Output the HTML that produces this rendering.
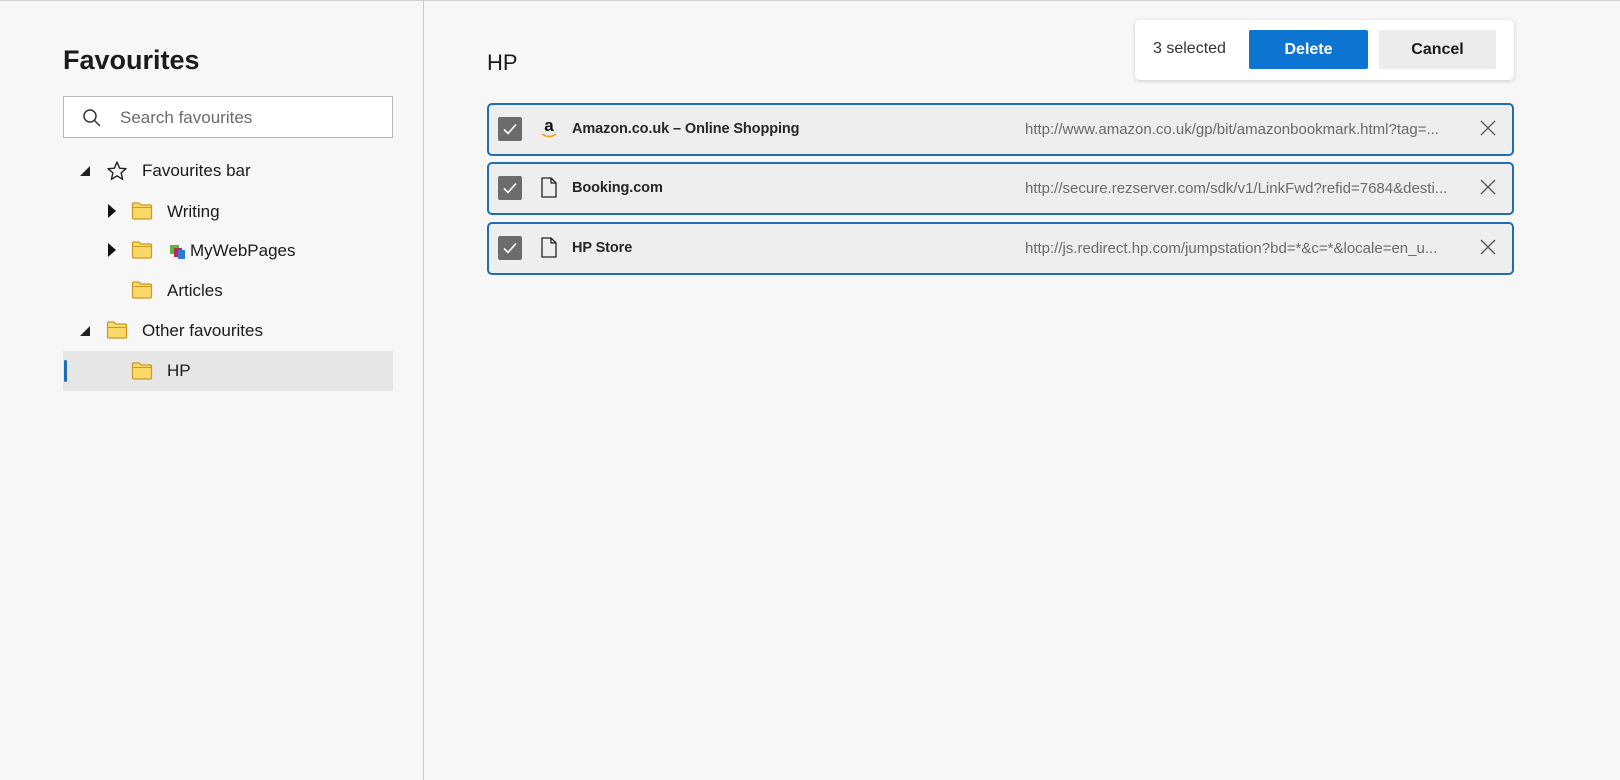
<!DOCTYPE html>
<html><head><meta charset="utf-8"><style>
*{box-sizing:border-box;margin:0;padding:0}
body{width:1620px;height:780px;background:#f7f7f7;font-family:"Liberation Sans",sans-serif;color:#1b1b1b;position:relative;overflow:hidden}
.abs{position:absolute}
.topline{left:0;top:0;width:1620px;height:1px;background:#d0d0d0}
.div{left:423px;top:0;width:1px;height:780px;background:#c8c8c8}
h1{position:absolute;left:63px;top:45px;font-size:27px;font-weight:600;color:#1b1b1b}
.search{left:63px;top:96px;width:330px;height:42px;border:1px solid #b8b8b8;background:#fff}
.search span{position:absolute;left:56px;top:11px;font-size:17px;color:#6b6b6b}
.tr{position:absolute;font-size:17px;color:#1b1b1b}
.sel{left:63px;top:351px;width:330px;height:40px;background:#e6e6e6}
.selbar{left:64px;top:360px;width:3px;height:22px;background:#1a6fb5;border-radius:2px}
.row{position:absolute;left:487px;width:1027px;height:53px;border:2px solid #1f6db3;border-radius:5px;background:#eeeeee}
.cb{position:absolute;left:9px;top:12px;width:24px;height:24px;background:#6c6c6c;border-radius:2px}
.rt{position:absolute;left:83px;top:16px;font-size:14.5px;font-weight:600;color:#262626;letter-spacing:-0.1px}
.ru{position:absolute;left:536px;top:16px;font-size:15px;color:#6a6a6a}
.x{position:absolute;left:990px;top:14px}
.tb{left:1135px;top:20px;width:379px;height:60px;background:#fff;border-radius:5px;box-shadow:0 1px 4px rgba(0,0,0,.18)}
</style></head><body>
<div class="abs topline"></div>
<div class="abs div"></div>
<h1>Favourites</h1>
<div class="abs search">
<svg class="abs" style="left:18px;top:11px" width="20" height="20" viewBox="0 0 20 20"><circle cx="8" cy="8" r="6" fill="none" stroke="#333" stroke-width="1.5"/><path d="M12.5 12.5L18 18" stroke="#333" stroke-width="1.5"/></svg>
<span>Search favourites</span></div>

<svg class="abs" style="left:78px;top:164px" width="14" height="14"><path d="M12 2L12 12L2 12Z" fill="#222"/></svg>
<svg class="abs" style="left:106px;top:160px" width="22" height="22" viewBox="0 0 22 22"><path d="M11 2L13.6 8.2L20 8.7L15.1 12.9L16.6 19.3L11 15.9L5.4 19.3L6.9 12.9L2 8.7L8.4 8.2Z" fill="none" stroke="#222" stroke-width="1.4" stroke-linejoin="round"/></svg>
<div class="tr" style="left:142px;top:161px">Favourites bar</div>

<svg class="abs" style="left:107px;top:203px" width="10" height="16"><path d="M1 1L9 8L1 15Z" fill="#111"/></svg>
<svg class="abs" style="left:131px;top:201px" width="22" height="20" viewBox="0 0 22 20"><path d="M1.5 3.5Q1.5 2 3 2H8L10 4H19Q20.5 4 20.5 5.5V16.5Q20.5 18 19 18H3Q1.5 18 1.5 16.5Z" fill="#fcd86a" stroke="#c99a1e" stroke-width="1.2"/><path d="M1.5 6.5H20.5" stroke="#c99a1e" stroke-width="1"/></svg>
<div class="tr" style="left:167px;top:202px">Writing</div>

<svg class="abs" style="left:107px;top:242px" width="10" height="16"><path d="M1 1L9 8L1 15Z" fill="#111"/></svg>
<svg class="abs" style="left:131px;top:240px" width="22" height="20" viewBox="0 0 22 20"><path d="M1.5 3.5Q1.5 2 3 2H8L10 4H19Q20.5 4 20.5 5.5V16.5Q20.5 18 19 18H3Q1.5 18 1.5 16.5Z" fill="#fcd86a" stroke="#c99a1e" stroke-width="1.2"/><path d="M1.5 6.5H20.5" stroke="#c99a1e" stroke-width="1"/></svg>
<svg class="abs" style="left:169px;top:243px" width="18" height="18"><rect x="1" y="2" width="9" height="9" fill="#5cb83a"/><rect x="5" y="5" width="8" height="9" fill="#c0245c"/><rect x="9" y="7" width="7" height="9" fill="#2f7ad8"/></svg>
<div class="tr" style="left:190px;top:241px">MyWebPages</div>

<svg class="abs" style="left:131px;top:280px" width="22" height="20" viewBox="0 0 22 20"><path d="M1.5 3.5Q1.5 2 3 2H8L10 4H19Q20.5 4 20.5 5.5V16.5Q20.5 18 19 18H3Q1.5 18 1.5 16.5Z" fill="#fcd86a" stroke="#c99a1e" stroke-width="1.2"/><path d="M1.5 6.5H20.5" stroke="#c99a1e" stroke-width="1"/></svg>
<div class="tr" style="left:167px;top:281px">Articles</div>

<svg class="abs" style="left:78px;top:324px" width="14" height="14"><path d="M12 2L12 12L2 12Z" fill="#222"/></svg>
<svg class="abs" style="left:106px;top:320px" width="22" height="20" viewBox="0 0 22 20"><path d="M1.5 3.5Q1.5 2 3 2H8L10 4H19Q20.5 4 20.5 5.5V16.5Q20.5 18 19 18H3Q1.5 18 1.5 16.5Z" fill="#fcd86a" stroke="#c99a1e" stroke-width="1.2"/><path d="M1.5 7.5H20.5" stroke="#c99a1e" stroke-width="1"/></svg>
<div class="tr" style="left:142px;top:321px">Other favourites</div>

<div class="abs sel"></div><div class="abs selbar"></div>
<svg class="abs" style="left:131px;top:361px" width="22" height="20" viewBox="0 0 22 20"><path d="M1.5 3.5Q1.5 2 3 2H8L10 4H19Q20.5 4 20.5 5.5V16.5Q20.5 18 19 18H3Q1.5 18 1.5 16.5Z" fill="#fcd86a" stroke="#c99a1e" stroke-width="1.2"/><path d="M1.5 6.5H20.5" stroke="#c99a1e" stroke-width="1"/></svg>
<div class="tr" style="left:167px;top:361px">HP</div>

<div class="abs" style="left:487px;top:50px;font-size:22px;color:#1b1b1b">HP</div>

<div class="abs tb">
<div class="abs" style="left:18px;top:20px;font-size:16px;color:#333">3 selected</div>
<div class="abs" style="left:114px;top:10px;width:119px;height:39px;background:#0d74d1;color:#fff;font-weight:600;font-size:16px;text-align:center;line-height:39px;border-radius:2px">Delete</div>
<div class="abs" style="left:244px;top:10px;width:117px;height:39px;background:#ececec;color:#1b1b1b;font-weight:600;font-size:16px;text-align:center;line-height:39px;border-radius:2px">Cancel</div>
</div>

<div class="row" style="top:103px">
<div class="cb"><svg width="24" height="24"><path d="M6 12.5L10 16.5L18 7.5" fill="none" stroke="#fff" stroke-width="1.6"/></svg></div>
<div class="abs" style="left:50px;top:11px;width:20px;height:24px;font-weight:bold;font-size:17px;color:#111;text-align:center">a<svg class="abs" style="left:2px;top:17px" width="16" height="6"><path d="M1 1Q8 6 15 1" fill="none" stroke="#f3a21d" stroke-width="1.6"/></svg></div>
<div class="rt">Amazon.co.uk – Online Shopping</div>
<div class="ru">http://www.amazon.co.uk/gp/bit/amazonbookmark.html?tag=...</div>
<svg class="x" width="18" height="18"><path d="M2 2L16 16M16 2L2 16" stroke="#555" stroke-width="1.3"/></svg>
</div>
<div class="row" style="top:162px">
<div class="cb"><svg width="24" height="24"><path d="M6 12.5L10 16.5L18 7.5" fill="none" stroke="#fff" stroke-width="1.6"/></svg></div>
<svg class="abs" style="left:51px;top:12px" width="18" height="24" viewBox="0 0 18 24"><path d="M2 2H11L16 7V21H2Z M11 2V7H16" fill="none" stroke="#222" stroke-width="1.3" stroke-linejoin="round"/></svg>
<div class="rt">Booking.com</div>
<div class="ru">http://secure.rezserver.com/sdk/v1/LinkFwd?refid=7684&amp;desti...</div>
<svg class="x" width="18" height="18"><path d="M2 2L16 16M16 2L2 16" stroke="#555" stroke-width="1.3"/></svg>
</div>
<div class="row" style="top:222px">
<div class="cb"><svg width="24" height="24"><path d="M6 12.5L10 16.5L18 7.5" fill="none" stroke="#fff" stroke-width="1.6"/></svg></div>
<svg class="abs" style="left:51px;top:12px" width="18" height="24" viewBox="0 0 18 24"><path d="M2 2H11L16 7V21H2Z M11 2V7H16" fill="none" stroke="#222" stroke-width="1.3" stroke-linejoin="round"/></svg>
<div class="rt">HP Store</div>
<div class="ru">http://js.redirect.hp.com/jumpstation?bd=*&amp;c=*&amp;locale=en_u...</div>
<svg class="x" width="18" height="18"><path d="M2 2L16 16M16 2L2 16" stroke="#555" stroke-width="1.3"/></svg>
</div>
</body></html>
